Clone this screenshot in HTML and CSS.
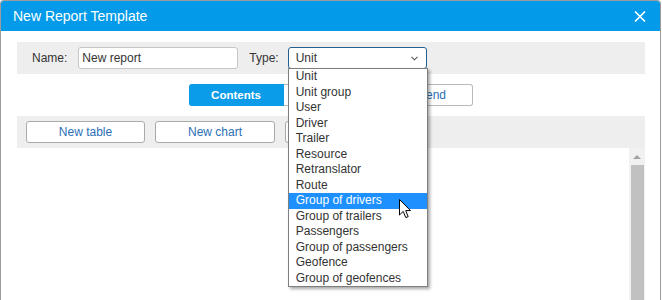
FILE: index.html
```
<!DOCTYPE html>
<html>
<head>
<meta charset="utf-8">
<link rel="stylesheet" href="styles.css">
</head>
<body>
<div class="dialog">
  <div class="titlebar">
    <span class="title">New Report Template</span>
    <svg class="close" width="12" height="11" viewBox="0 0 12 11"><path d="M1 0.5 L11 10.5 M11 0.5 L1 10.5" stroke="#fff" stroke-width="1.6" fill="none"/></svg>
  </div>
  <div class="body">
    <div class="panel name-row">
      <span class="label">Name:</span>
      <div class="input">New report</div>
      <span class="label type-label">Type:</span>
      <div class="select-wrap">
        <div class="select">
          <span>Unit</span>
          <svg class="chev" width="7" height="5" viewBox="0 0 7 5"><polyline points="0.5,0.8 3.5,3.8 6.5,0.8" stroke="#555" stroke-width="1.1" fill="none"/></svg>
        </div>
        <ul class="options">
          <li>Unit</li>
          <li>Unit group</li>
          <li>User</li>
          <li>Driver</li>
          <li>Trailer</li>
          <li>Resource</li>
          <li>Retranslator</li>
          <li>Route</li>
          <li class="hl">Group of drivers</li>
          <li>Group of trailers</li>
          <li>Passengers</li>
          <li>Group of passengers</li>
          <li>Geofence</li>
          <li>Group of geofences</li>
        </ul>
        <svg class="cursor" width="13" height="20" viewBox="0 0 13 20"><path d="M0.5 0.5 L0.5 16 L4.2 12.4 L6.8 18.6 L9.2 17.6 L6.7 11.6 L11.5 11.6 Z" fill="#fff" stroke="#000" stroke-width="1" stroke-linejoin="round"/></svg>
      </div>
    </div>
    <div class="tabs">
      <div class="tab active">Contents</div>
      <div class="tab"></div>
      <div class="tab last"><span class="tab-text">Legend</span></div>
    </div>
    <div class="panel tool-row">
      <div class="btn">New table</div>
      <div class="btn">New chart</div>
      <div class="btn"></div>
    </div>
    <div class="content">
      <div class="list"></div>
      <div class="scrollbar">
        <div class="arrow-zone"><div class="arrow"></div></div>
        <div class="thumb"></div>
      </div>
    </div>
  </div>
</div>
</body>
</html>
```
FILE: styles.css
```
* { box-sizing: border-box; }
html, body { margin: 0; padding: 0; background: #fff; }
body {
  font-family: "Liberation Sans", Arial, sans-serif;
  color: #333;
  font-size: 12px;
}
.dialog {
  width: 661px;
  height: 300px;
  border: 1px solid #9c9c9c;
  border-bottom: none;
  border-radius: 4px 4px 0 0;
  overflow: hidden;
  display: flex;
  flex-direction: column;
}
.titlebar {
  height: 30px;
  flex: none;
  background: #039be9;
  color: #fff;
  font-size: 14px;
  display: flex;
  align-items: center;
  justify-content: space-between;
  padding: 0 14px 0 12px;
}
.close { display: block; margin-top: 1px; }
.body {
  flex: 1;
  padding: 11px 15px 0 16px;
  display: flex;
  flex-direction: column;
  min-height: 0;
}
.panel {
  background: #eeeeee;
  height: 32px;
  flex: none;
  display: flex;
  align-items: center;
}
.name-row { padding-left: 15px; }
.label { color: #333; }
.input {
  width: 160px;
  height: 22px;
  margin-left: 11px;
  border: 1px solid #c6c6c6;
  border-radius: 3px;
  background: #fff;
  padding-left: 3px;
  line-height: 20px;
  color: #333;
}
.type-label { margin-left: 11px; }
.select-wrap {
  position: relative;
  margin-left: 9px;
}
.select {
  width: 139px;
  height: 22px;
  border: 1px solid #245f91;
  border-radius: 3px;
  background: #fff;
  display: flex;
  align-items: center;
  justify-content: space-between;
  padding: 0 8px 0 7px;
  color: #333;
}
.chev { display: block; margin-top: 1px; }
.options {
  position: absolute;
  left: 0;
  top: 21px;
  width: 140px;
  margin: 0;
  padding: 0;
  list-style: none;
  background: #fff;
  border: 1px solid #7f7f7f;
  box-shadow: 2px 2px 3px rgba(0,0,0,0.35);
  z-index: 5;
}
.options li {
  height: 15.5px;
  line-height: 15.5px;
  padding-left: 7px;
  color: #333;
  white-space: nowrap;
}
.options li.hl { background: #1e90ff; color: #fff; }
.cursor {
  position: absolute;
  left: 111px;
  top: 152px;
  z-index: 6;
}
.tabs {
  display: flex;
  justify-content: center;
  margin: 10px 0 10px;
  flex: none;
}
.tab {
  height: 22px;
  line-height: 20px;
  width: 94px;
  text-align: center;
  border: 1px solid #b9b9b9;
  border-left: none;
  color: #2a6fb6;
  background: #fff;
}
.tab.active {
  width: 95px;
  background: #0a9be9;
  border-color: #0a9be9;
  color: #fff;
  font-weight: bold;
  font-size: 11.5px;
  border-radius: 3px 0 0 3px;
}
.tab.last {
  width: 95px;
  border-radius: 0 3px 3px 0;
  text-align: right;
  padding-right: 26px;
}
.tool-row { padding-left: 9px; gap: 10px; }
.btn {
  width: 119px;
  height: 22px;
  line-height: 20px;
  text-align: center;
  border: 1px solid #ababab;
  border-radius: 3px;
  background: #fff;
  color: #2a6fb6;
}
.tool-row .btn:nth-child(2) { width: 120px; }
.content {
  flex: 1;
  display: flex;
  min-height: 0;
}
.list { flex: 1; background: #fff; }
.scrollbar {
  width: 16px;
  background: #f1f1f1;
  display: flex;
  flex-direction: column;
}
.arrow-zone {
  height: 17px;
  display: flex;
  justify-content: center;
  padding-top: 7px;
}
.arrow {
  width: 0;
  height: 0;
  border-left: 4px solid transparent;
  border-right: 4px solid transparent;
  border-bottom: 4px solid #a3a3a3;
}
.thumb {
  flex: 1;
  margin: 0 1px 0 2px;
  background: #c1c1c1;
}
```
